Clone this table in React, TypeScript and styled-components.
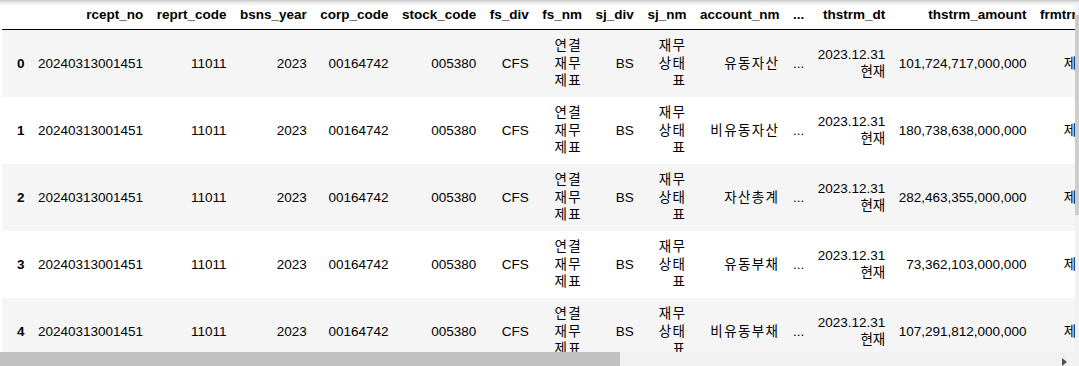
import React from "react";
import styled, { createGlobalStyle } from "styled-components";

const GlobalStyle = createGlobalStyle`
  html, body { margin: 0; padding: 0; background: #ffffff; }
  body { font-family: "Liberation Sans", Arial, "Noto Sans CJK KR", sans-serif; }
`;

const Frame = styled.div`
  width: 1079px;
  height: 366px;
  overflow: hidden;
  display: grid;
  grid-template-columns: 1075px 4px;
  grid-template-rows: 352px 14px;
  background: linear-gradient(to bottom, #c2c2c2 0px, #e6e6e6 2px, #ffffff 6px) no-repeat, #ffffff;
  background-size: 100% 6px;
`;

const Viewport = styled.div`
  overflow: hidden;
  padding-left: 2px;
  box-sizing: border-box;
`;

const Table = styled.table`
  width: 1px;
  border-collapse: collapse;
  border-spacing: 0;
  border: none;
  font-family: "Liberation Sans", Arial, "Noto Sans CJK KR", sans-serif;
  font-size: 13.5px;
  color: #000000;
`;

const Head = styled.thead`
  border-bottom: 1px solid #000000;
`;

const HeadCell = styled.th`
  padding: 6.75px;
  line-height: 15.5px;
  font-weight: bold;
  text-align: right;
  vertical-align: bottom;
  white-space: nowrap;
`;

const IndexHeadCell = styled(HeadCell)`
  padding-left: 15px;
`;

const Row = styled.tr`
  &:nth-child(odd) {
    background: #f5f5f5;
  }
`;

const IndexCell = styled.th`
  padding: 6.75px 6.75px 6.75px 15px;
  line-height: 17.83px;
  font-weight: bold;
  text-align: right;
  vertical-align: middle;
`;

const Cell = styled.td<{ $hangul?: boolean }>`
  padding: 6.75px;
  line-height: 17.83px;
  text-align: right;
  vertical-align: middle;
  letter-spacing: ${(p) => (p.$hangul ? "1.4px" : "normal")};
`;

const HScroll = styled.div`
  display: flex;
  align-items: stretch;
  background: #f1f1f1;
  height: 14px;
`;

const HThumb = styled.div<{ $width: number }>`
  width: ${(p) => p.$width}px;
  background: #c1c1c1;
`;

const HTrack = styled.div`
  flex: 1;
`;

const ArrowButton = styled.div`
  width: 18px;
  display: flex;
  align-items: flex-start;
  padding: 6px 0 0 5px;
  box-sizing: border-box;
`;

const ArrowRight = styled.div`
  width: 0;
  height: 0;
  border-top: 4px solid transparent;
  border-bottom: 4px solid transparent;
  border-left: 5px solid #505050;
`;

const VBar = styled.div`
  grid-column: 2;
  grid-row: 1 / span 2;
  display: flex;
  flex-direction: column;
  padding-top: 5px;
  box-sizing: border-box;
`;

const VTrack = styled.div`
  flex: 1;
  background: #f1f1f1;
  display: flex;
  flex-direction: column;
  padding-top: 10px;
`;

const VThumb = styled.div<{ $height: number }>`
  height: ${(p) => p.$height}px;
  background: #cdcdcd;
`;

const columns = [
  "rcept_no",
  "reprt_code",
  "bsns_year",
  "corp_code",
  "stock_code",
  "fs_div",
  "fs_nm",
  "sj_div",
  "sj_nm",
  "account_nm",
  "...",
  "thstrm_dt",
  "thstrm_amount",
  "frmtrm_nm",
  "frmtrm_dt",
  "frmtrm_amount",
  "ord",
  "currency",
];

const hangulColumns = new Set([6, 8, 9]);

const accounts: [string, string, string][] = [
  ["유동자산", "101,724,717,000,000", "88,318,350,000,000"],
  ["비유동자산", "180,738,638,000,000", "167,423,430,000,000"],
  ["자산총계", "282,463,355,000,000", "255,741,780,000,000"],
  ["유동부채", "73,362,103,000,000", "73,394,570,000,000"],
  ["비유동부채", "107,291,812,000,000", "92,713,270,000,000"],
];

const rows = accounts.map(([name, amount, prev], i) => [
  "20240313001451",
  "11011",
  "2023",
  "00164742",
  "005380",
  "CFS",
  "연결재무제표",
  "BS",
  "재무상태표",
  name,
  "...",
  "2023.12.31 현재",
  amount,
  "제 55 기",
  "2022.12.31 현재",
  prev,
  String(i + 1),
  "KRW",
]);

export default function App() {
  return (
    <>
      <GlobalStyle />
      <Frame>
        <Viewport>
          <Table>
            <Head>
              <tr>
                <IndexHeadCell />
                {columns.map((c, i) => (
                  <HeadCell key={i}>{c}</HeadCell>
                ))}
              </tr>
            </Head>
            <tbody>
              {rows.map((r, i) => (
                <Row key={i}>
                  <IndexCell>{i}</IndexCell>
                  {r.map((v, j) => (
                    <Cell key={j} $hangul={hangulColumns.has(j)}>
                      {v}
                    </Cell>
                  ))}
                </Row>
              ))}
            </tbody>
          </Table>
        </Viewport>
        <VBar>
          <VTrack>
            <VThumb $height={200} />
          </VTrack>
        </VBar>
        <HScroll>
          <HThumb $width={620} />
          <HTrack />
          <ArrowButton>
            <ArrowRight />
          </ArrowButton>
        </HScroll>
      </Frame>
    </>
  );
}
